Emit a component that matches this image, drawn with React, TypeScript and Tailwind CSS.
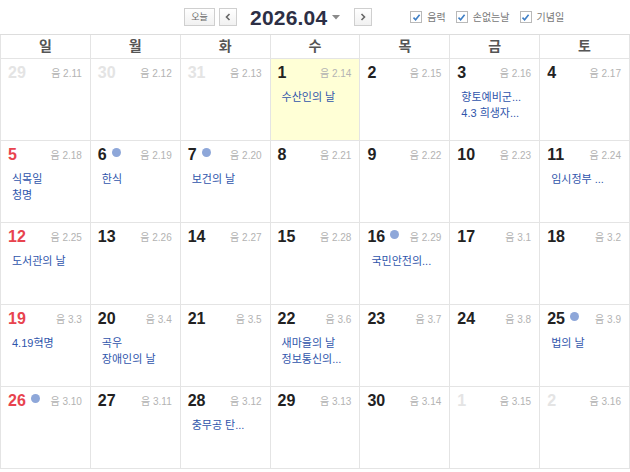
import React from "react";

type Day = {
  d: number;
  lunar: string;
  events?: string[];
  dim?: boolean;
  dot?: boolean;
  today?: boolean;
};

const FONT = "font-['Liberation_Sans','Noto_Sans_CJK_KR',sans-serif]";

const weeks: Day[][] = [
  [
    { d: 29, lunar: "2.11", dim: true },
    { d: 30, lunar: "2.12", dim: true },
    { d: 31, lunar: "2.13", dim: true },
    { d: 1, lunar: "2.14", today: true, events: ["수산인의 날"] },
    { d: 2, lunar: "2.15" },
    { d: 3, lunar: "2.16", events: ["향토예비군...", "4.3 희생자..."] },
    { d: 4, lunar: "2.17" },
  ],
  [
    { d: 5, lunar: "2.18", events: ["식목일", "청명"] },
    { d: 6, lunar: "2.19", dot: true, events: ["한식"] },
    { d: 7, lunar: "2.20", dot: true, events: ["보건의 날"] },
    { d: 8, lunar: "2.21" },
    { d: 9, lunar: "2.22" },
    { d: 10, lunar: "2.23" },
    { d: 11, lunar: "2.24", events: ["임시정부 ..."] },
  ],
  [
    { d: 12, lunar: "2.25", events: ["도서관의 날"] },
    { d: 13, lunar: "2.26" },
    { d: 14, lunar: "2.27" },
    { d: 15, lunar: "2.28" },
    { d: 16, lunar: "2.29", dot: true, events: ["국민안전의..."] },
    { d: 17, lunar: "3.1" },
    { d: 18, lunar: "3.2" },
  ],
  [
    { d: 19, lunar: "3.3", events: ["4.19혁명"] },
    { d: 20, lunar: "3.4", events: ["곡우", "장애인의 날"] },
    { d: 21, lunar: "3.5" },
    { d: 22, lunar: "3.6", events: ["새마을의 날", "정보통신의..."] },
    { d: 23, lunar: "3.7" },
    { d: 24, lunar: "3.8" },
    { d: 25, lunar: "3.9", dot: true, events: ["법의 날"] },
  ],
  [
    { d: 26, lunar: "3.10", dot: true },
    { d: 27, lunar: "3.11" },
    { d: 28, lunar: "3.12", events: ["충무공 탄..."] },
    { d: 29, lunar: "3.13" },
    { d: 30, lunar: "3.14" },
    { d: 1, lunar: "3.15", dim: true },
    { d: 2, lunar: "3.16", dim: true },
  ],
];

const dow = ["일", "월", "화", "수", "목", "금", "토"];

function Check({ label }: { label: string }) {
  return (
    <label className="flex items-center gap-[5px]">
      <span className="w-[12px] h-[12px] border border-[#b9b9b9] bg-white flex items-center justify-center">
        <svg width="9" height="9" viewBox="0 0 9 9">
          <path d="M1.5 4.6 L3.6 6.7 L7.6 1.8" fill="none" stroke="#3f7fc6" strokeWidth="1.6" />
        </svg>
      </span>
      <span className="text-[10px] text-[#777]">{label}</span>
    </label>
  );
}

function Cell({ day, col }: { day: Day; col: number }) {
  const numColor = day.dim
    ? "text-[#e4e4e4]"
    : col === 0
    ? "text-[#e8434e]"
    : "text-[#222]";
  return (
    <div
      className={`h-[82px] border-r border-b border-[#e4e4e4] px-[7px] pt-[4px] ${
        day.today ? "bg-[#ffffd6]" : "bg-white"
      }`}
    >
      <div className="flex items-center justify-between h-[20px]">
        <div className="flex items-center">
          <span className={`text-[16px] font-bold leading-[20px] ${numColor}`}>{day.d}</span>
          {day.dot && <span className="ml-[5px] mb-[6px] w-[9px] h-[9px] rounded-full bg-[#8ea7d9]" />}
        </div>
        <span className="text-[10px] text-[#b3b3b3] pr-px">
          음 {day.lunar}
        </span>
      </div>
      <div className="mt-[6px] pl-[4px]">
        {day.events?.map((e, i) => (
          <div key={i} className="text-[11px] leading-[16px] text-[#2f55ab] whitespace-nowrap">
            {e}
          </div>
        ))}
      </div>
    </div>
  );
}

export default function App() {
  return (
    <div className={`w-[630px] h-[472px] bg-white overflow-hidden ${FONT}`}>
      <div className="h-[35px] flex items-center border-b border-[#dddddd]">
        <div className="flex items-center pl-[184px]">
          <button className="w-[31px] h-[18px] border border-[#cfcfcf] bg-gradient-to-b from-white to-[#f1f1f1] text-[9px] text-[#666] leading-none">
            오늘
          </button>
          <button className="ml-[4px] w-[18px] h-[18px] border border-[#cfcfcf] bg-gradient-to-b from-white to-[#f1f1f1] flex items-center justify-center">
            <svg width="6" height="8" viewBox="0 0 6 8">
              <path d="M4.5 1 L1.5 4 L4.5 7" fill="none" stroke="#666" strokeWidth="1.6" />
            </svg>
          </button>
          <span className="ml-[13px] text-[21px] font-bold text-[#2d2f45] leading-none tracking-[0.2px]">
            2026.04
          </span>
          <svg className="ml-[5px]" width="8" height="5" viewBox="0 0 8 5">
            <path d="M0 0 H8 L4 4.5 Z" fill="#8a8a8a" />
          </svg>
          <button className="ml-[14px] w-[18px] h-[18px] border border-[#cfcfcf] bg-gradient-to-b from-white to-[#f1f1f1] flex items-center justify-center">
            <svg width="6" height="8" viewBox="0 0 6 8">
              <path d="M1.5 1 L4.5 4 L1.5 7" fill="none" stroke="#666" strokeWidth="1.6" />
            </svg>
          </button>
        </div>
        <div className="ml-[38px] flex items-center gap-[10px]">
          <Check label="음력" />
          <Check label="손없는날" />
          <Check label="기념일" />
        </div>
      </div>
      <div className="border-l border-[#e4e4e4] w-[630px]">
        <div className="grid grid-cols-7">
          {dow.map((d) => (
            <div
              key={d}
              className="h-[24px] border-r border-b border-[#e4e4e4] flex items-center justify-center text-[14px] font-bold text-[#555]"
            >
              {d}
            </div>
          ))}
        </div>
        {weeks.map((w, i) => (
          <div key={i} className="grid grid-cols-7">
            {w.map((day, j) => (
              <Cell key={j} day={day} col={j} />
            ))}
          </div>
        ))}
      </div>
    </div>
  );
}
